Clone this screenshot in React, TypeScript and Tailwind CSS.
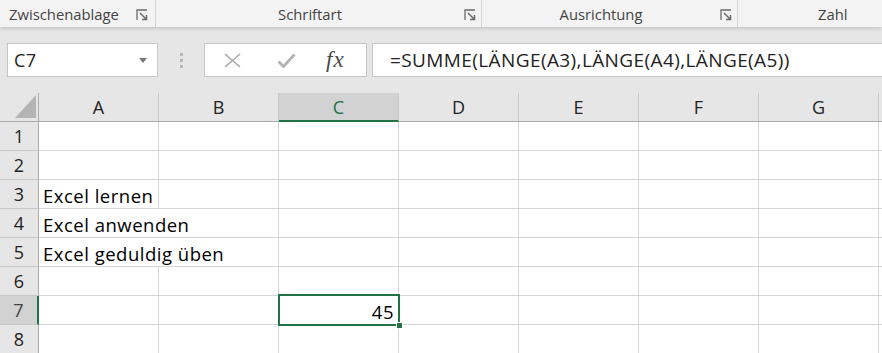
import React from "react";

const Launcher = () => (
  <svg width="12" height="12" viewBox="0 0 12 12" className="shrink-0">
    <path d="M1 11V1h10" stroke="#6b6b6b" strokeWidth="1.3" fill="none" />
    <path d="M4 4l6.5 6.5M10.5 6v4.5H6" stroke="#6b6b6b" strokeWidth="1.5" fill="none" />
  </svg>
);

const cols = ["A", "B", "C", "D", "E", "F", "G"];
const rows = [1, 2, 3, 4, 5, 6, 7, 8];
const data: Record<string, string> = {
  A3: "Excel lernen",
  A4: "Excel anwenden",
  A5: "Excel geduldig üben",
};

const ui = { fontFamily: '"Open Sans", "Noto Sans", sans-serif' };

export default function App() {
  return (
    <div className="relative w-[882px] h-[353px] overflow-hidden bg-[#e6e6e6]" style={ui}>
      {/* Ribbon group labels */}
      <div className="relative z-10 flex h-[27px] bg-[#f3f3f3] text-[14.8px] text-[#444] shadow-[0_2px_3px_rgba(0,0,0,0.13)]">
        <div className="flex w-[156px] shrink-0 items-center border-r border-[#d6d6d6] pl-[9px] pr-[7px] pt-[2px]">
          <span className="flex-1">Zwischenablage</span>
          <Launcher />
        </div>
        <div className="flex w-[326px] shrink-0 items-center border-r border-[#d6d6d6] pr-[5px] pt-[2px]">
          <span className="flex-1 text-center">Schriftart</span>
          <Launcher />
        </div>
        <div className="flex w-[256px] shrink-0 items-center border-r border-[#d6d6d6] pr-[5px] pt-[2px]">
          <span className="flex-1 text-center">Ausrichtung</span>
          <Launcher />
        </div>
        <div className="flex items-center pl-[80px] pt-[2px]">
          <span>Zahl</span>
        </div>
      </div>

      {/* Formula bar */}
      <div className="flex h-[34px] items-stretch pl-[7px] mt-[16px]">
        <div className="flex w-[151px] items-center justify-between border border-[#c6c6c6] bg-white pl-[6px] pr-[10px] text-[18px] tracking-[0.4px] text-[#222]">
          <span>C7</span>
          <svg width="8" height="5" viewBox="0 0 8 5">
            <path d="M0 0h8L4 5z" fill="#777" />
          </svg>
        </div>
        <div className="flex w-[46px] flex-col items-center justify-center gap-[3px]">
          <span className="block h-[3px] w-[3px] bg-[#b8b8b8]" />
          <span className="block h-[3px] w-[3px] bg-[#b8b8b8]" />
          <span className="block h-[3px] w-[3px] bg-[#b8b8b8]" />
        </div>
        <div className="flex w-[163px] items-center border border-[#c6c6c6] bg-white">
          <div className="ml-[17px] flex w-[20px] justify-center">
            <svg width="17" height="15" viewBox="0 0 17 15">
              <path d="M1 1l15 13M16 1L1 14" stroke="#a8a8a8" strokeWidth="1.6" fill="none" />
            </svg>
          </div>
          <div className="ml-[33px] flex w-[22px] justify-center">
            <svg width="19" height="15" viewBox="0 0 19 15">
              <path d="M1.5 8.5l5 5L17.5 1.5" stroke="#b4b4b4" strokeWidth="3" fill="none" strokeLinejoin="miter" />
            </svg>
          </div>
          <span
            className="ml-[29px] text-[23px] italic text-[#4a4a4a] tracking-[1px]"
            style={{ fontFamily: '"Liberation Serif", "DejaVu Serif", serif' }}
          >
            fx
          </span>
        </div>
        <div className="ml-[5px] flex flex-1 items-center border border-r-0 border-[#c6c6c6] bg-white pl-[17px] text-[19px] tracking-[0.4px] text-[#222]">
          =SUMME(LÄNGE(A3),LÄNGE(A4),LÄNGE(A5))
        </div>
      </div>

      {/* Sheet */}
      <div className="mt-[16px]">
        {/* column headers */}
        <div className="flex h-[29px] border-b border-[#ababab] text-[18px] text-[#222]">
          <div className="relative w-[39px] shrink-0 border-r border-[#ababab]">
            <svg className="absolute left-[15px] top-[2px]" width="22" height="24" viewBox="0 0 22 24">
              <path d="M21 0V23H0z" fill="#b4b4b4" />
            </svg>
          </div>
          {cols.map((c) => (
            <div
              key={c}
              className={
                c === "C"
                  ? "flex w-[120px] shrink-0 items-center justify-center border-r border-[#c8c8c8] border-b-2 border-b-[#217346] bg-[#d2d2d2] text-[#217346] -mb-[1px] pt-[1px]"
                  : "flex w-[120px] shrink-0 items-center justify-center border-r border-[#c8c8c8] pt-[1px]"
              }
            >
              {c}
            </div>
          ))}
          <div className="flex-1" />
        </div>
        {rows.map((r) => (
          <div key={r} className="flex h-[29px]">
            <div
              className={
                r === 7
                  ? "flex w-[39px] shrink-0 items-center justify-center border-b border-[#c8c8c8] border-r-2 border-r-[#217346] bg-[#d2d2d2] text-[18px] text-[#444] pt-[1px]"
                  : "flex w-[39px] shrink-0 items-center justify-center border-b border-[#c8c8c8] border-r border-r-[#ababab] text-[18px] text-[#222] pt-[1px]"
              }
            >
              {r}
            </div>
            {cols.map((c) => {
              const key = `${c}${r}`;
              const isC7 = key === "C7";
              return (
                <div
                  key={key}
                  className="relative flex w-[120px] shrink-0 items-center border-b border-r border-[#d4d4d4] bg-white text-[18.5px] tracking-[0.5px] text-black"
                >
                  {data[key] && (
                    <span className="absolute inset-y-0 left-[4px] z-10 flex items-center whitespace-nowrap bg-white pr-[3px] pt-[3px]">
                      {data[key]}
                    </span>
                  )}
                  {isC7 && <span className="ml-auto mr-[4px] pt-[3px]">45</span>}
                </div>
              );
            })}
            <div className="flex-1 border-b border-[#d4d4d4] bg-white" />
          </div>
        ))}
      </div>

      {/* selection */}
      <div className="pointer-events-none absolute left-[278px] top-[294px] z-20 h-[32px] w-[122px] border-2 border-[#217346]">
        <div className="absolute -bottom-[5px] -right-[5px] h-[7px] w-[7px] border border-white bg-[#217346]" />
      </div>
    </div>
  );
}
